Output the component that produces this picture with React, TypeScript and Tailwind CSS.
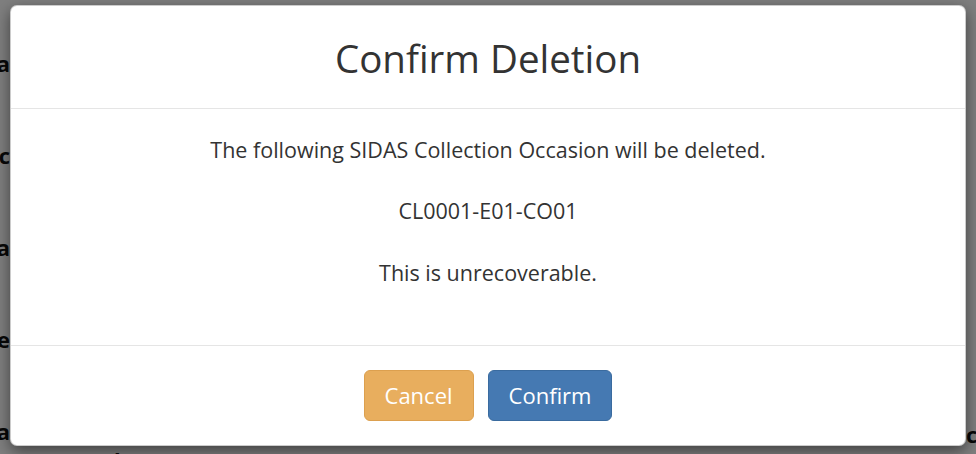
import React from 'react';

const tails = ['a', 'c', 'a', 'e', 'na'];

const App: React.FC = () => {
  return (
    <div
      className="relative w-[976px] h-[454px] overflow-hidden bg-white"
      style={{ fontFamily: '"Open Sans", "Liberation Sans", sans-serif' }}
    >
      {/* Page behind the dialog */}
      <div className="flex flex-col pt-[52px] gap-[70px] text-[22px] font-bold text-[#111] leading-[22px]">
        {tails.map((t, i) => (
          <div key={i} className="flex justify-end w-[10px] whitespace-nowrap">
            <span>{t}</span>
          </div>
        ))}
      </div>
      <div className="absolute left-[30px] top-[444px] text-[22px] font-bold text-[#111] whitespace-nowrap">
        Enter a l
      </div>
      <div className="absolute left-[966px] top-[418px] text-[22px] font-bold text-[#111] whitespace-nowrap">
        cl
      </div>

      {/* Backdrop */}
      <div className="absolute inset-0 bg-black/50" />

      {/* Dialog */}
      <div className="absolute left-[10px] top-[5px] w-[956px] h-[441px] flex flex-col bg-white rounded-[7px] border border-black/20 shadow-[0_5px_15px_rgba(0,0,0,0.5)] text-[#333]">
        <div className="h-[103px] shrink-0 flex items-center justify-center border-b border-[#e5e5e5]">
          <h4 className="text-[38.5px] leading-[46px] mt-[2px]">Confirm Deletion</h4>
        </div>
        <div className="flex-1 px-[26px] pt-[25px] text-center text-[21.5px] leading-[31px]">
          <p className="mb-[30px]">The following SIDAS Collection Occasion will be deleted.</p>
          <p className="mb-[31px]">CL0001-E01-CO01</p>
          <p>This is unrecoverable.</p>
        </div>
        <div className="h-[100px] shrink-0 flex items-center justify-center gap-[14px] border-t border-[#e5e5e5]">
          <button className="h-[51px] px-5 rounded-[6px] border border-[#dca04f] bg-[#e8ae5e] text-white text-[22px] leading-[31px] font-medium">
            Cancel
          </button>
          <button className="h-[51px] px-5 rounded-[6px] border border-[#3a6b9f] bg-[#4579b2] text-white text-[22px] leading-[31px] font-medium">
            Confirm
          </button>
        </div>
      </div>
    </div>
  );
};

export default App;
